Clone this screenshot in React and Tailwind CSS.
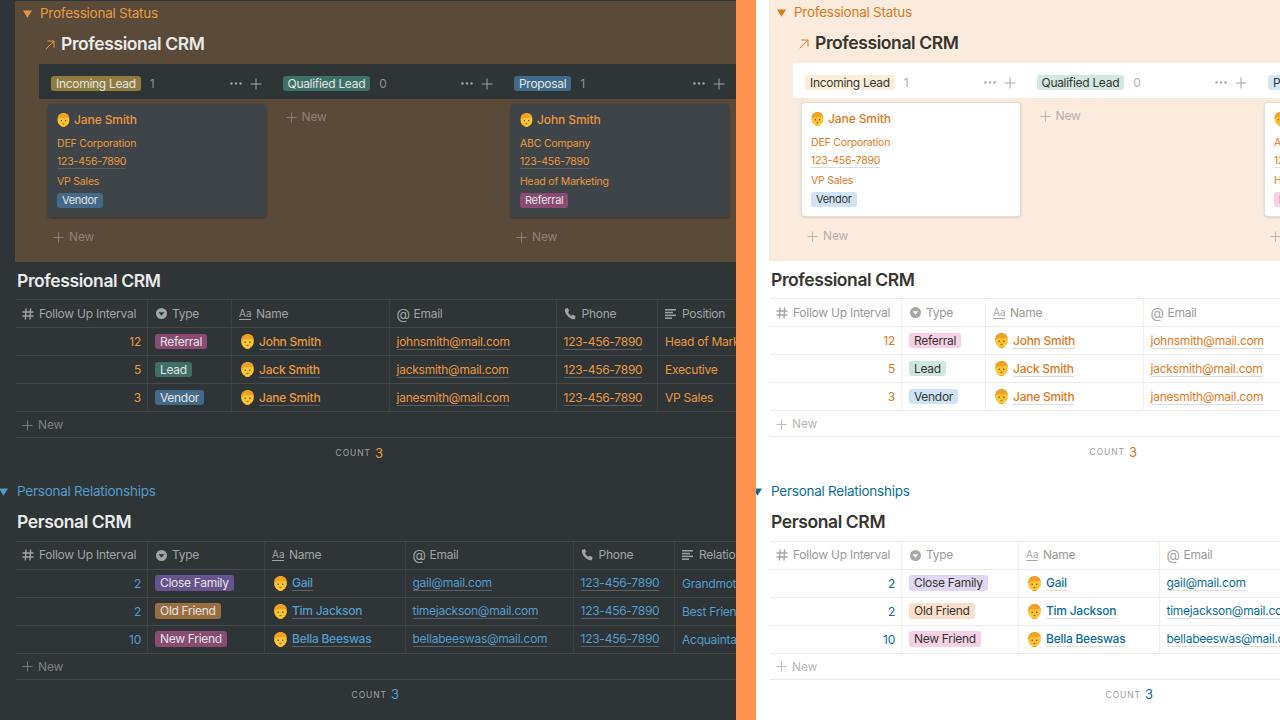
import React from "react";

const dark = {
  pane: "bg-[#2f3437] pt-px", inner: "", gap: "mt-[11px]",
  orange: "text-[#e8993f]", blue: "text-[#529cca]",
  orangeBg: "bg-[#5a4a3a]", band: "bg-[#2f3437]",
  card: "bg-[#3f4448] shadow-[0_1px_3px_rgba(0,0,0,0.35)]",
  title: "text-[#e9eaea]", head: "text-[#a0a3a5]", count: "text-[#8f9294]",
  newB: "text-[#8d8378]", newT: "text-[#7c8082]", icons: "text-[#a0a3a5]",
  line: "border-[#43484b]", lineDim: "border-[#3c4144]",
  tagText: "text-[#e3e4e5]", ul: "border-[#595d60]", footer: "text-[#a0a3a5]",
  tags: {
    "Incoming Lead": "bg-[#8f7d3f]", "Qualified Lead": "bg-[#3f7067]", Proposal: "bg-[#3f6a8a]",
    Vendor: "bg-[#44698a]", Referral: "bg-[#8a4a72]", Lead: "bg-[#3f7067]",
    "Close Family": "bg-[#66528f]", "Old Friend": "bg-[#9a6f3f]", "New Friend": "bg-[#8a4a72]",
  },
};
const light = {
  pane: "bg-white", inner: "-ml-[2px]", gap: "mt-[12px]",
  orange: "text-[#dd7a1c]", blue: "text-[#0b6e99]",
  orangeBg: "bg-[#faebdd]", band: "bg-white",
  card: "bg-white shadow-[0_0_0_1px_#e0dcd8,0_1px_3px_rgba(60,40,20,0.3)]",
  title: "text-[#37352f]", head: "text-[#9b9a97]", count: "text-[#b0afab]",
  newB: "text-[#b8b0a8]", newT: "text-[#b9b8b5]", icons: "text-[#a8a7a3]",
  line: "border-[#ebebea]", lineDim: "border-[#f1f1f0]",
  tagText: "text-[#37352f]", ul: "border-[#dedddb]", footer: "text-[#9b9a97]",
  tags: {
    "Incoming Lead": "bg-[#fbeedb]", "Qualified Lead": "bg-[#d3e8e1]", Proposal: "bg-[#d3e5f7]",
    Vendor: "bg-[#cfe3f7]", Referral: "bg-[#f7d0e6]", Lead: "bg-[#d0e7e1]",
    "Close Family": "bg-[#e0d6f5]", "Old Friend": "bg-[#fbdfcd]", "New Friend": "bg-[#f7d0e6]",
  },
};

const Face = ({ className = "" }) => (
  <svg viewBox="0 0 13 15" className={`shrink-0 ${className}`}>
    <rect x="4" y="11" width="5" height="4" rx="1.500" fill="#e9a21c" />
    <ellipse cx="6.500" cy="8" rx="6.300" ry="6.400" fill="#fdc62f" />
    <path d="M.2 7.500C-.4 2.800 2.600 0 6.800 0c3.700 0 6.600 2.600 6 7.500-.3-1.400-.8-2.500-1.500-3-2.200 1-5.400 1.100-7.800.5C2.300 5.600 1 6.500.2 7.500z" fill="#f0a024" />
    <circle cx="4.200" cy="8.300" r=".8" fill="#6b4a12" />
    <circle cx="8.800" cy="8.300" r=".8" fill="#6b4a12" />
    <ellipse cx="6.500" cy="11.500" rx="1.200" ry=".7" fill="#b5651d" />
  </svg>
);

const Plus = ({ className = "" }) => (
  <svg viewBox="0 0 12 12" className={`shrink-0 ${className}`} fill="none" stroke="currentColor" strokeWidth="1">
    <path d="M6 .5v11M.5 6h11" />
  </svg>
);
const Dots = ({ className = "" }) => (
  <svg viewBox="0 0 12 3" className={`shrink-0 ${className}`} fill="currentColor">
    <circle cx="1.500" cy="1.500" r="1.200" /><circle cx="6" cy="1.500" r="1.200" /><circle cx="10.500" cy="1.500" r="1.200" />
  </svg>
);
const Tri = ({ className = "" }) => (
  <svg viewBox="0 0 9 8" className={`shrink-0 ${className}`} fill="currentColor"><path d="M0 .5h9L4.500 7.800z" /></svg>
);
const Arrow = ({ className = "" }) => (
  <svg viewBox="0 0 10 10" className={`shrink-0 ${className}`} fill="none" stroke="currentColor" strokeWidth="1"><path d="M.8 9.200 9 1M2.400 1H9v6.600" /></svg>
);
const HashI = () => (
  <svg viewBox="0 0 12 12" className="w-3 h-3 shrink-0" fill="none" stroke="currentColor" strokeWidth="1.400"><path d="M4 .5 3.400 11.500M8.600.5 8 11.500M.5 4h11M.5 8h11" /></svg>
);
const SelectI = () => (
  <svg viewBox="0 0 12 12" className="w-[11px] h-[11px] shrink-0"><circle cx="6" cy="6" r="6" fill="currentColor" /><path d="M2.800 4.600h6.400L6 8.400z" fill="var(--ic,#2f3437)" /></svg>
);
const AaI = () => (
  <span className="w-3 shrink-0 text-[10px] leading-[11px] border-b border-current text-center tracking-normal">Aa</span>
);
const AtI = () => <span className="w-3 shrink-0 text-[14px] leading-none text-center tracking-normal">@</span>;
const PhoneI = () => (
  <svg viewBox="0 0 12 12" className="w-3 h-3 shrink-0" fill="currentColor"><path d="M2.200.4 3.900 0l1.300 3-1.200 1c.5 1.500 1.800 3 3.300 3.800l1.100-1.100L11.600 8l-.4 2c-.2.9-1 1.400-1.900 1.200C4.800 10.300 1 6 .8 2.300.7 1.300 1.300.6 2.200.4z" /></svg>
);
const LinesI = () => (
  <svg viewBox="0 0 12 12" className="w-3 h-3 shrink-0" fill="currentColor"><rect y="1" width="11" height="1.500" /><rect y="3.800" width="8" height="1.500" /><rect y="6.600" width="11" height="1.500" /><rect y="9.400" width="7" height="1.500" /></svg>
);

const Tag = ({ t, name, small }) => (
  <span className={`inline-flex items-center rounded-[3px] px-[5px] whitespace-nowrap tracking-[-0.3px] ${small ? "h-[15px] text-[11px]" : "h-[15.500px] text-[12px]"} ${t.tags[name]} ${t.tagText}`}>{name}</span>
);

const Card = ({ t, name, company, role, tag }) => (
  <div className={`w-[218px] h-[113px] rounded-[3px] pl-[9px] ${t.card} ${t.orange}`}>
    <div className="flex items-center h-[32px] mt-px text-[12px] tracking-[-0.1px] font-medium">
      <Face className="w-[13px] h-[14px] mr-[4px]" />{name}
    </div>
    <div className="text-[10.500px] tracking-[-0.2px] leading-[14px] mt-px">{company}</div>
    <div className="text-[10.500px] tracking-[-0.2px] leading-[14px] mt-[4px]"><span className={`border-b ${t.ul}`}>123-456-7890</span></div>
    <div className="text-[10.500px] tracking-[-0.2px] leading-[14px] mt-[6px]">{role}</div>
    <div className="mt-[4px] flex"><Tag t={t} name={tag} small /></div>
  </div>
);

const ColHead = ({ t, name, n }) => (
  <div className="w-[218px] shrink-0 flex items-center pl-[3px] pr-[4.500px]">
    <Tag t={t} name={name} />
    <span className={`ml-[9px] text-[12px] ${t.count}`}>{n}</span>
    <Dots className={`ml-auto w-[12px] h-[3px] ${t.icons}`} />
    <Plus className={`ml-[8px] w-[12px] h-[12px] ${t.icons}`} />
  </div>
);

const NewBtn = ({ className = "" }) => (
  <div className={`flex items-center text-[12px] tracking-[-0.1px] ${className}`}><Plus className="w-[11px] h-[11px] mr-[5px]" />New</div>
);

const Cell = ({ t, className = "", children }) => (
  <div className={`flex items-center overflow-hidden whitespace-nowrap border-r text-[12px] tracking-[-0.25px] ${t.lineDim} ${className}`}>{children}</div>
);

const Link = ({ t, children }) => <span className={`border-b leading-[15px] ${t.ul}`}>{children}</span>;

const Table = ({ t, cols, accent, lastHead, rows }) => (
  <div className="ml-[16px] w-[1000px]">
    <div className={`grid h-[29px] border-y ${cols} ${t.line} ${t.head}`}>
      <Cell t={t} className="pl-[6px] gap-[5px]"><span className={t.icons}><HashI /></span>Follow Up Interval</Cell>
      <Cell t={t} className="pl-[8px] gap-[5px]"><span className={t.icons}><SelectI /></span>Type</Cell>
      <Cell t={t} className="pl-[7px] gap-[5px]"><span className={`flex ${t.icons}`}><AaI /></span>Name</Cell>
      <Cell t={t} className="pl-[6.500px] gap-[5px]"><span className={`flex ${t.icons}`}><AtI /></span>Email</Cell>
      <Cell t={t} className="pl-[6.500px] gap-[6px]"><span className={t.icons}><PhoneI /></span>Phone</Cell>
      <Cell t={t} className="pl-[7px] gap-[5px] border-r-0"><span className={t.icons}><LinesI /></span>{lastHead}</Cell>
    </div>
    {rows.map((r) => (
      <div key={r.name} className={`grid h-[28px] border-b ${cols} ${t.line}`}>
        <Cell t={t} className={`justify-end pr-[6px] pt-px ${accent}`}>{r.n}</Cell>
        <Cell t={t} className="pl-[7px]"><Tag t={t} name={r.tag} /></Cell>
        <Cell t={t} className={`pl-[9px] gap-[5px] font-medium ${accent}`}><Face className="w-[13px] h-[15px]" /><Link t={t}>{r.name}</Link></Cell>
        <Cell t={t} className={`pl-[6.500px] ${accent}`}><Link t={t}>{r.email}</Link></Cell>
        <Cell t={t} className={`pl-[6.500px] ${accent}`}><Link t={t}>123-456-7890</Link></Cell>
        <Cell t={t} className={`pl-[7px] pt-px border-r-0 ${accent}`}>{r.last}</Cell>
      </div>
    ))}
    <div className={`h-[26px] border-b pl-[6px] pt-px flex items-center ${t.line} ${t.newT}`}><NewBtn /></div>
    <div className={`h-[30px] pt-px grid ${cols}`}>
      <div className={`col-span-3 flex items-center justify-end pr-[7px] gap-[4px] ${t.footer}`}>
        <span className="text-[8.500px] tracking-[0.9px]">COUNT</span>
        <span className={`text-[13px] ${accent}`}>3</span>
      </div>
    </div>
  </div>
);

const proRows = [
  { n: 12, tag: "Referral", name: "John Smith", email: "johnsmith@mail.com", last: "Head of Marketing" },
  { n: 5, tag: "Lead", name: "Jack Smith", email: "jacksmith@mail.com", last: "Executive" },
  { n: 3, tag: "Vendor", name: "Jane Smith", email: "janesmith@mail.com", last: "VP Sales" },
];
const perRows = [
  { n: 2, tag: "Close Family", name: "Gail", email: "gail@mail.com", last: "Grandmother" },
  { n: 2, tag: "Old Friend", name: "Tim Jackson", email: "timejackson@mail.com", last: "Best Friend" },
  { n: 10, tag: "New Friend", name: "Bella Beeswas", email: "bellabeeswas@mail.com", last: "Acquaintance" },
];

const titleCls = "font-semibold text-[17.500px] tracking-[-0.4px]";
const toggleCls = "text-[13.500px] tracking-[-0.25px]";

const Pane = ({ t, className }) => (
  <div className={`relative h-[720px] overflow-hidden ${t.pane} ${className}`}>
    <div className={t.inner}>
      <div className={`ml-[15px] w-[1000px] h-[261px] overflow-hidden ${t.orangeBg}`}>
        <div className={`flex items-center h-[25px] pl-[8px] ${toggleCls} ${t.orange}`}>
          <Tri className="w-[9px] h-[8px] mr-[8px]" />Professional Status
        </div>
        <div className="flex items-center h-[36px] pl-[30px] pt-px">
          <Arrow className={`w-[10px] h-[10px] mr-[6px] ${t.orange}`} />
          <span className={`${titleCls} ${t.title}`}>Professional CRM</span>
        </div>
        <div className={`mt-[2px] ml-[24px] h-[35px] pt-[4px] flex items-center gap-[13.500px] pl-[9px] ${t.band}`}>
          <ColHead t={t} name="Incoming Lead" n={1} />
          <ColHead t={t} name="Qualified Lead" n={0} />
          <ColHead t={t} name="Proposal" n={1} />
        </div>
        <div className="ml-[24px] pt-[4px] flex gap-[13.500px] pl-[9px]">
          <div className="w-[218px] shrink-0">
            <Card t={t} name="Jane Smith" company="DEF Corporation" role="VP Sales" tag="Vendor" />
            <NewBtn className={`mt-[13px] ml-[5px] h-[14px] ${t.newB}`} />
          </div>
          <div className="w-[218px] shrink-0">
            <NewBtn className={`mt-[7px] ml-[6px] h-[14px] ${t.newB}`} />
          </div>
          <div className="w-[218px] shrink-0">
            <Card t={t} name="John Smith" company="ABC Company" role="Head of Marketing" tag="Referral" />
            <NewBtn className={`mt-[13px] ml-[5px] h-[14px] ${t.newB}`} />
          </div>
        </div>
      </div>

      <div className={`flex items-center h-[37px] pl-[17px] pt-[2px] ${titleCls} ${t.title}`}>Professional CRM</div>
      <Table t={t} cols="grid-cols-[132px_84px_158px_167px_101px_358px]" accent={t.orange} lastHead="Position" rows={proRows} />

      <div className={`flex items-center h-[24px] pt-px -ml-px ${toggleCls} ${t.gap} ${t.blue}`}>
        <Tri className="w-[9px] h-[8px] mr-[9px]" />Personal Relationships
      </div>
      <div className={`flex items-center h-[37.500px] pl-[17px] ${titleCls} ${t.title}`}>Personal CRM</div>
      <Table t={t} cols="grid-cols-[132px_117px_141px_168px_101px_341px]" accent={t.blue} lastHead="Relation" rows={perRows} />
    </div>
  </div>
);

export default function App() {
  return (
    <div className="flex w-[1280px] h-[720px] overflow-hidden antialiased [font-family:Inter,'Liberation_Sans',sans-serif]">
      <Pane t={dark} className="w-[736px] shrink-0" />
      <div className="w-[20px] shrink-0 bg-[#ff924f]" />
      <Pane t={light} className="w-[524px] shrink-0 [--ic:#fff]" />
    </div>
  );
}
